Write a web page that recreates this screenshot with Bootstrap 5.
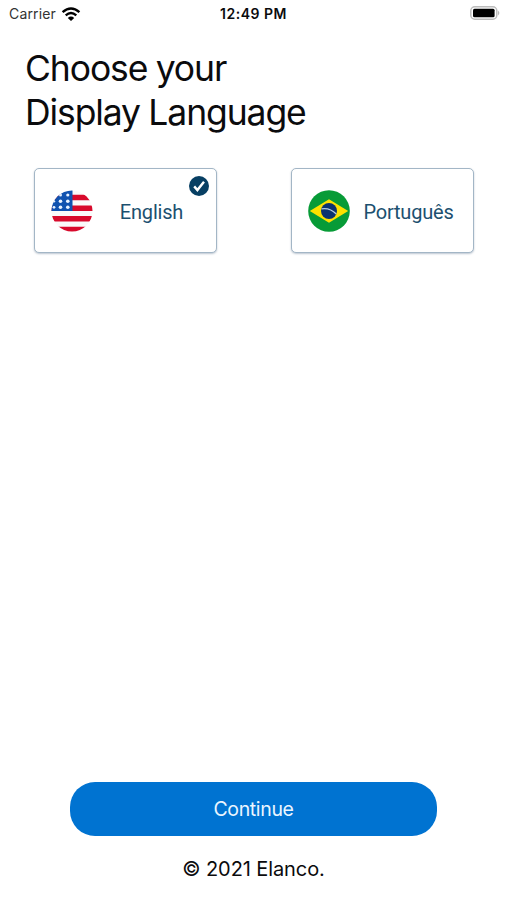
<!DOCTYPE html>
<html lang="en">
<head>
<meta charset="utf-8">
<meta name="viewport" content="width=device-width, initial-scale=1">
<title>Choose your Display Language</title>
<link href="https://cdn.jsdelivr.net/npm/bootstrap@5.3.0/dist/css/bootstrap.min.css" rel="stylesheet">
<style>
body{font-family:Inter,"Liberation Sans",sans-serif;color:#0b0b0d;background:#fff}
.screen{height:900px;overflow:hidden}
.status{height:28px;padding:0 7px 0 9px;font-size:14px;line-height:28px}
.status>div{flex:1 1 0}
.carrier{color:#333;letter-spacing:.15px}
.wifi{margin-left:5px}
.clock{font-size:14px;font-weight:600;letter-spacing:.5px;padding-right:2px}
.title{margin:19px 0 0 25px;font-size:35.5px;font-weight:400;line-height:43.5px;letter-spacing:-1.1px;word-spacing:-.5px}
.choices{margin:34px 33px 0 34px}
.choice{width:183px;height:85px;border:1.5px solid #a3b6c6;border-radius:5px;background:#fff;color:#1c506f;box-shadow:0 1px 2px rgba(60,90,120,.35);font-family:Roboto,sans-serif;font-size:20px;line-height:24px;letter-spacing:-.2px;padding:0 19px 0 16px}
.choice-label{padding:2px 0 0 13px}
.tick{right:7px;top:7px}
.go{width:367px;height:54px;border-radius:25px;background:#0073d1;color:#eaf5ff;border:0;font-size:19.5px;letter-spacing:-.35px;padding-top:8px}
.legal{margin:19px 0 17px;font-size:20px;line-height:28px;letter-spacing:-.1px}
</style>
</head>
<body>
<main class="screen d-flex flex-column">
  <header class="status d-flex align-items-center">
    <div class="d-flex align-items-center carrier"><span>Carrier</span>
      <svg class="wifi" width="20" height="15" viewBox="0 0 20 15" fill="none" stroke="#000" stroke-width="2.4"><path d="M1.6 5.2Q10-2.2 18.4 5.2M4.7 8.4Q10 3.8 15.3 8.4"/><path d="M10 14 6.8 10.9Q10 8.2 13.2 10.9Z" fill="#000" stroke="none"/></svg>
    </div>
    <div class="clock text-center">12:49 PM</div>
    <div class="d-flex justify-content-end">
      <svg width="30" height="16" viewBox="0 0 30 16"><rect x=".8" y=".8" width="26" height="12.4" rx="4" fill="#fff" stroke="#bcbcbc" stroke-width="1.5"/><rect x="3" y="2.8" width="21.6" height="8.4" rx="1.5" fill="#000"/><path d="M28.2 4.6q2.2 2.4 0 4.8z" fill="#aaa"/></svg>
    </div>
  </header>
  <h1 class="title">Choose your<br>Display Language</h1>
  <div class="choices d-flex justify-content-between">
    <button type="button" class="choice position-relative d-flex align-items-center">
      <svg width="42" height="42" viewBox="0 0 42 42"><defs><clipPath id="disc"><circle cx="21" cy="21" r="20.5"/></clipPath></defs>
        <g clip-path="url(#disc)"><path fill="#fafafa" d="M0 0h42v42H0z"/><path fill="#d80a2c" d="M0 4.8h42v5.5H0zM0 15.6h42v5.3H0zM0 26.1h42v5.4H0zM0 36.7h42V42H0z"/><path fill="#1052b0" d="M0 0h21.5v20.9H0z"/>
        <g fill="#e9f2ff"><circle cx="16.8" cy="5" r="1.6"/><circle cx="9.5" cy="5" r="1.5"/><circle cx="9.5" cy="11.3" r="1.8"/><circle cx="16.8" cy="11.3" r="1.8"/><circle cx="9.5" cy="17.3" r="1.8"/><circle cx="16.8" cy="17.3" r="1.8"/><circle cx="3" cy="17.3" r="1.4"/><circle cx="3" cy="11.3" r="1.2"/></g></g></svg>
      <span class="choice-label flex-fill text-center">English</span>
      <svg class="tick position-absolute" width="20" height="20" viewBox="0 0 20 20"><circle cx="10" cy="10" r="10" fill="#073f63"/><path d="m5.2 10.4 3.2 3.7 6.6-8.4" fill="none" stroke="#fff" stroke-width="2.4"/></svg>
    </button>
    <button type="button" class="choice d-flex align-items-center">
      <svg width="42" height="42" viewBox="0 0 42 42"><circle cx="21" cy="21" r="20.8" fill="#079b37"/><path d="M1.8 21 21 9.3 40.2 21 21 32.7z" fill="#fce100"/><circle cx="21" cy="21" r="8" fill="#0b3270"/><path d="M13.5 18.8q8.5-1.4 14.8 5.2" fill="none" stroke="#b5cce0" stroke-width="1.3"/></svg>
      <span class="choice-label flex-fill text-center">Português</span>
    </button>
  </div>
  <button type="button" class="btn go mt-auto mx-auto">Continue</button>
  <p class="legal text-center">© 2021 Elanco.</p>
</main>
<script src="https://cdn.jsdelivr.net/npm/bootstrap@5.3.0/dist/js/bootstrap.bundle.min.js"></script>
</body>
</html>
